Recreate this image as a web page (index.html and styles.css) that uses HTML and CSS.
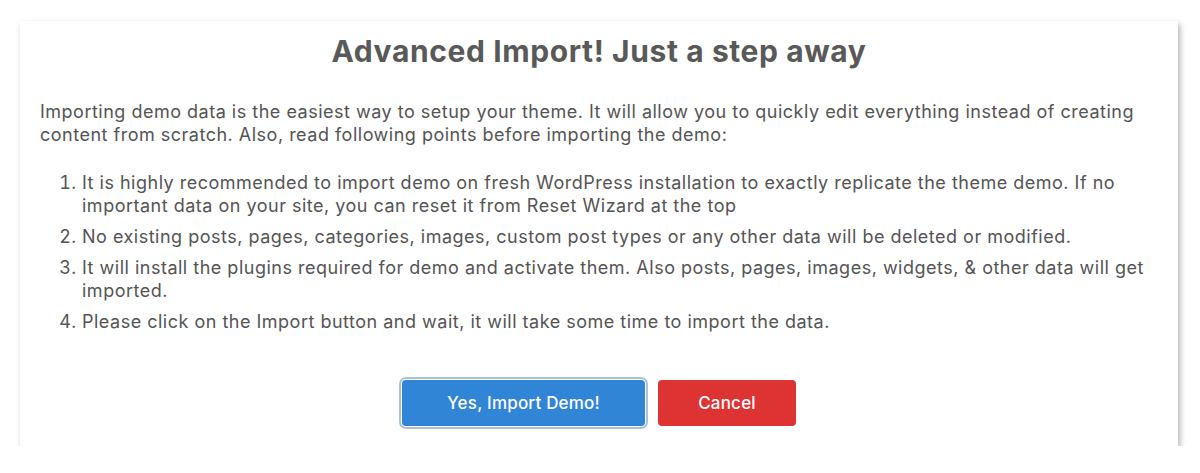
FILE: index.html
```html
<!DOCTYPE html>
<html>
<head>
    <title>Advanced Import</title>
    <meta charset="utf-8">
    <link rel="stylesheet" href="styles.css">
</head>
<body>
    <div class="popup">
        <h2 class="popup-title">Advanced Import! Just a step away</h2>
        <div class="popup-content">
            <p>Importing demo data is the easiest way to setup your theme. It will allow you to quickly edit everything instead of creating content from scratch. Also, read following points before importing the demo:</p>
            <ol class="points">
                <li>It is highly recommended to import demo on fresh WordPress installation to exactly replicate the theme demo. If no important data on your site, you can reset it from Reset Wizard at the top</li>
                <li>No existing posts, pages, categories, images, custom post types or any other data will be deleted or modified.</li>
                <li>It will install the plugins required for demo and activate them. Also posts, pages, images, widgets, &amp; other data will get imported.</li>
                <li>Please click on the Import button and wait, it will take some time to import the data.</li>
            </ol>
        </div>
        <div class="actions">
            <button class="btn btn-confirm">Yes, Import Demo!</button>
            <button class="btn btn-cancel">Cancel</button>
        </div>
    </div>
</body>
</html>
```

FILE: styles.css
```css
body {
    margin: 0;
    background: #fff;
    font-family: Inter, "Liberation Sans", sans-serif;
}
.popup {
    margin: 21px 0 0 20px;
    width: 1158px;
    height: 425px;
    box-sizing: border-box;
    padding: 11px 20px 0 20px;
    background: #fff;
    box-shadow: 2px 3px 6px rgba(0, 0, 0, 0.3);
    display: flex;
    flex-direction: column;
}
.popup-title {
    margin: 0;
    text-align: center;
    font-size: 30px;
    font-weight: 700;
    letter-spacing: 0.6px;
    line-height: 38px;
    color: #595959;
}
.popup-content {
    margin-top: 30px;
    font-size: 18px;
    letter-spacing: 0.5px;
    line-height: 23px;
    color: #545454;
}
.popup-content p {
    margin: 0;
}
.points {
    margin: 25px 0 0 0;
    padding-left: 42px;
}
.points li {
    margin-bottom: 8px;
}
.actions {
    margin-top: 39px;
    display: flex;
    justify-content: center;
    gap: 13px;
}
.btn {
    height: 46px;
    border: none;
    border-radius: 4px;
    font-family: inherit;
    font-size: 17px;
    font-weight: 500;
    letter-spacing: 0.2px;
    color: #fff;
    cursor: pointer;
}
.btn-confirm {
    width: 243px;
    background: #3085d6;
    box-shadow: 0 0 0 1px #fff, 0 0 0 3px rgba(50, 100, 150, 0.4);
}
.btn-cancel {
    width: 138px;
    background: #dd3333;
}
```
